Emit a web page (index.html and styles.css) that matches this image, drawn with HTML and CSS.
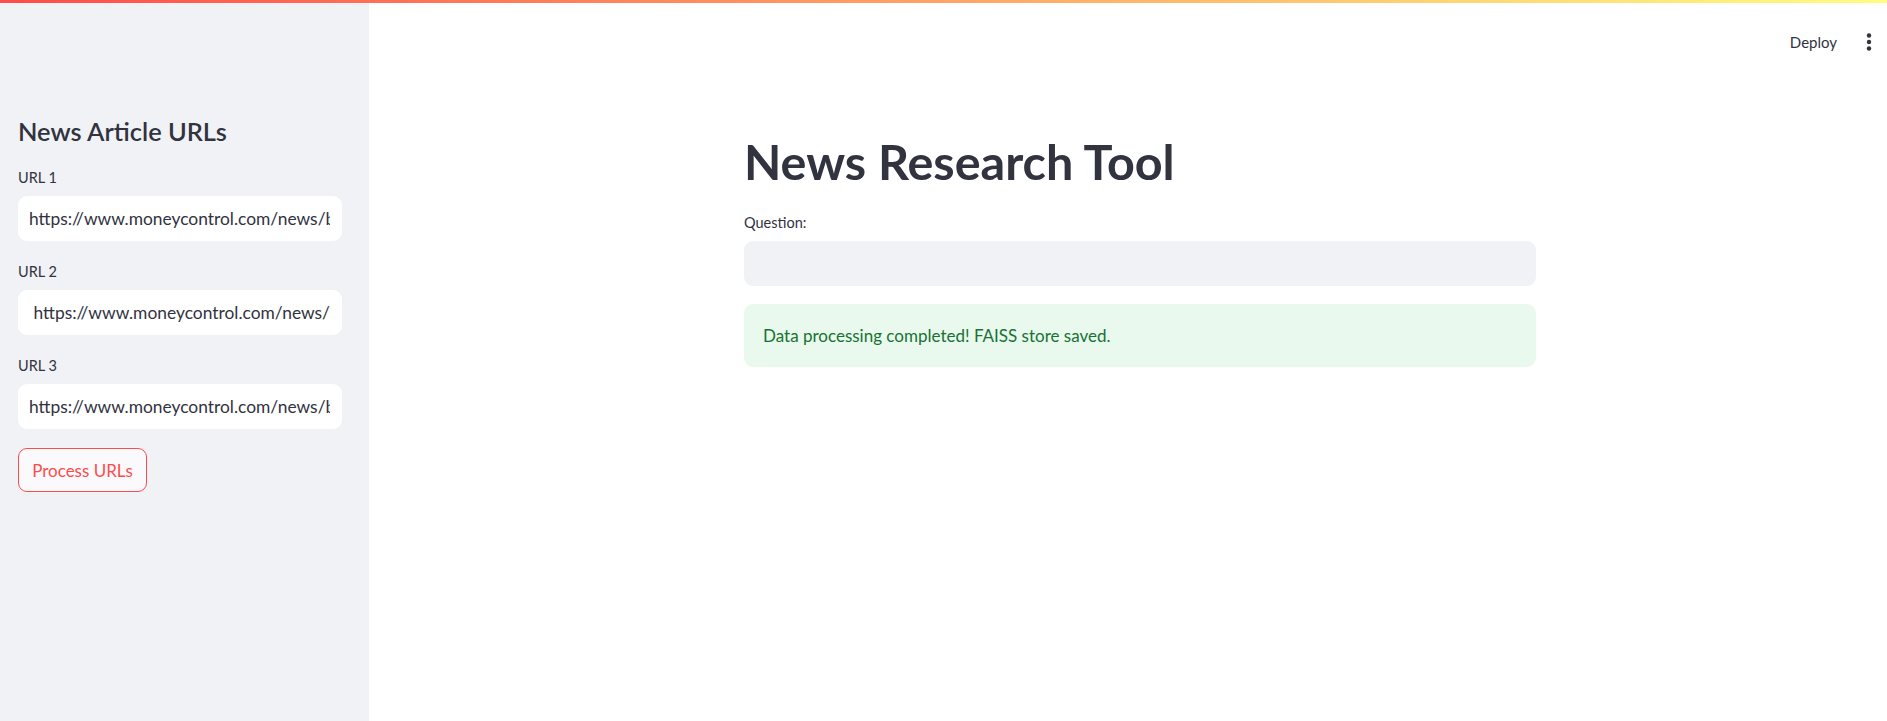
FILE: index.html
```html
<!DOCTYPE html>
<html lang="en">
<head>
<meta charset="utf-8">
<title>News Research Tool</title>
<link rel="stylesheet" href="styles.css">
</head>
<body>
<div class="decoration"></div>
<div class="app">
  <aside class="sidebar">
    <h2 class="side-title">News Article URLs</h2>
    <div class="field">
      <label class="label">URL 1</label>
      <input class="side-input" type="text" value="https://www.moneycontrol.com/news/business/tata-motors-mahindra-gain-certificates-for-production-linked-payouts">
    </div>
    <div class="field">
      <label class="label">URL 2</label>
      <input class="side-input" type="text" value=" https://www.moneycontrol.com/news/business/tata-motors-launches-punch-icng-price-starts-at-rs-7-1-lakh">
    </div>
    <div class="field">
      <label class="label">URL 3</label>
      <input class="side-input" type="text" value="https://www.moneycontrol.com/news/business/stocks/buy-tata-motors-target-of-rs-743-kr-choksey">
    </div>
    <button class="process-btn" type="button">Process URLs</button>
  </aside>
  <main class="main">
    <header class="topbar">
      <span class="deploy">Deploy</span>
      <span class="menu" aria-label="menu">
        <svg width="6" height="18" viewBox="0 0 6 18"><circle cx="3" cy="2.5" r="2.2" fill="#31333F"/><circle cx="3" cy="9" r="2.2" fill="#31333F"/><circle cx="3" cy="15.5" r="2.2" fill="#31333F"/></svg>
      </span>
    </header>
    <section class="content">
      <h1 class="title">News Research Tool</h1>
      <label class="label">Question:</label>
      <input class="main-input" type="text" value="">
      <div class="success">Data processing completed! FAISS store saved.</div>
    </section>
  </main>
</div>
</body>
</html>
```

FILE: styles.css
```css
* { box-sizing: border-box; }
html, body {
  margin: 0;
  padding: 0;
  height: 100%;
}
body {
  font-family: "Source Sans Pro", Lato, "Liberation Sans", sans-serif;
  color: #31333F;
  background: #ffffff;
  overflow: hidden;
}
.decoration {
  position: absolute;
  top: 0;
  left: 0;
  right: 0;
  height: 3px;
  background: linear-gradient(90deg, #ff4b4b, #fffd80);
  z-index: 10;
}
.app {
  display: flex;
  height: 100vh;
}
.sidebar {
  width: 369px;
  flex: 0 0 369px;
  background: #F0F2F6;
  padding: 115px 27px 0 18px;
  display: flex;
  flex-direction: column;
}
.side-title {
  margin: 0 0 21px;
  font-size: 25.4px;
  line-height: 32px;
  font-weight: 600;
  color: #31333F;
}
.field {
  display: flex;
  flex-direction: column;
  gap: 8px;
  margin-bottom: 21px;
}
.label {
  display: block;
  font-size: 14.5px;
  line-height: 20px;
  color: #31333F;
}
.side-input {
  width: 324px;
  height: 45px;
  border: none;
  border-radius: 9px;
  background: #ffffff;
  padding: 0 12px 0 11px;
  font-family: inherit;
  font-size: 17.4px;
  color: #31333F;
  outline: none;
}
.process-btn {
  align-self: flex-start;
  margin-top: -2px;
  height: 44px;
  width: 129px;
  border: 1px solid #ff4b4b;
  border-radius: 9px;
  background: #fafafc;
  color: #ff4b4b;
  font-family: inherit;
  font-size: 17px;
  padding: 0;
}
.main {
  flex: 1;
  display: flex;
  flex-direction: column;
}
.topbar {
  height: 84px;
  display: flex;
  align-items: center;
  justify-content: flex-end;
  padding-right: 15px;
  gap: 29px;
}
.deploy {
  font-size: 15px;
  color: #31333F;
}
.menu {
  display: flex;
  align-items: center;
}
.content {
  width: 792px;
  margin: 0 auto;
  position: relative;
  left: 12px;
  padding-top: 48px;
  display: flex;
  flex-direction: column;
}
.title {
  margin: 0 0 23px;
  font-size: 48.5px;
  line-height: 58px;
  font-weight: 700;
  color: #31333F;
}
.content .label {
  margin-bottom: 8px;
}
.main-input {
  width: 100%;
  height: 45px;
  border: none;
  border-radius: 9px;
  background: #F0F2F6;
  outline: none;
  padding: 0 12px;
  font-family: inherit;
  font-size: 17px;
}
.success {
  margin-top: 18px;
  height: 63px;
  border-radius: 9px;
  background: #E9F9EE;
  color: #177233;
  font-size: 17px;
  line-height: 27px;
  padding: 18px 19px;
}
```
